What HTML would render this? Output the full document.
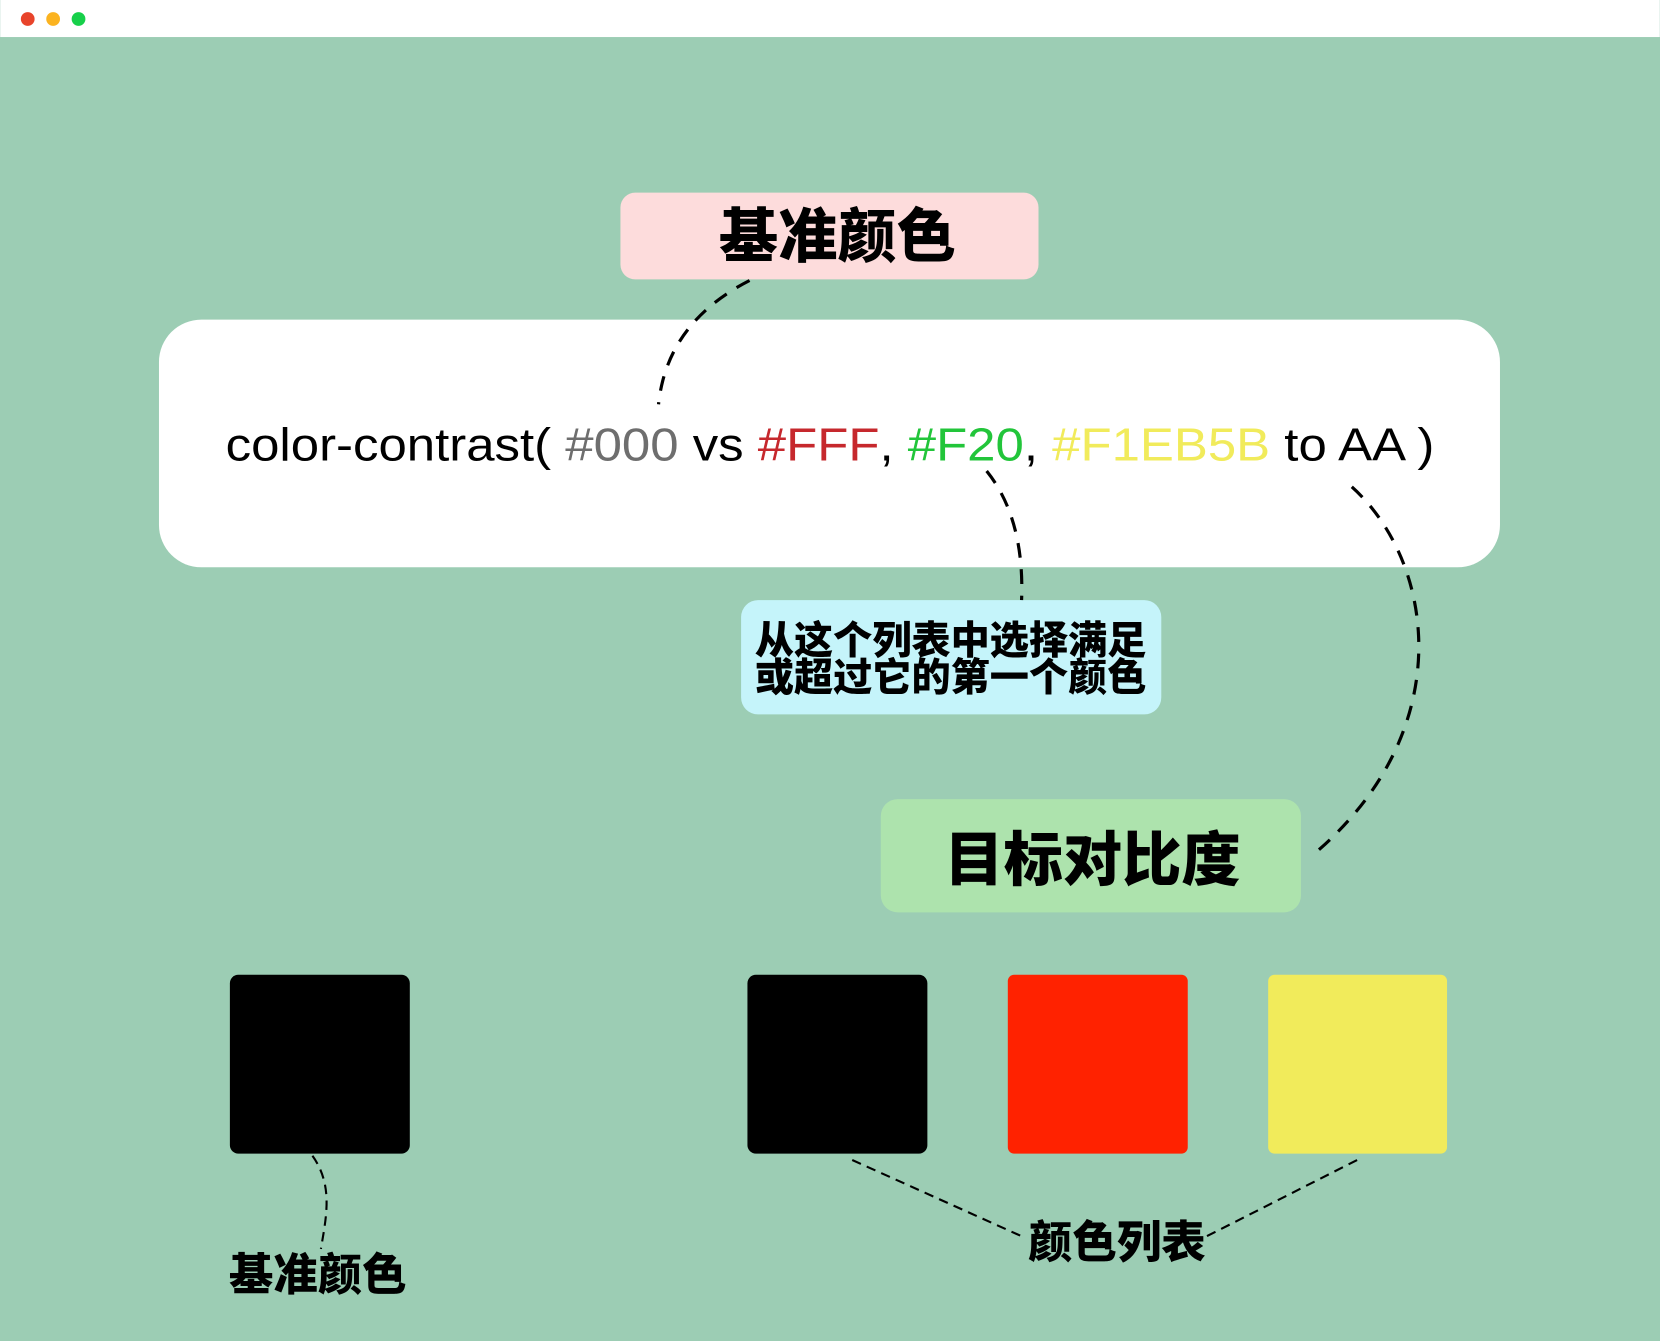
<!DOCTYPE html>
<html><head><meta charset="utf-8"><style>
html,body{margin:0;padding:0;background:#9ccdb4;}
svg{display:block}
.cjk{font-family:"Liberation Sans","Noto Sans CJK SC",sans-serif;font-weight:900;fill:#000}
</style></head><body>
<svg width="1660" height="1341" viewBox="0 0 1568 1267" xmlns="http://www.w3.org/2000/svg">
<rect x="0" y="0" width="1568" height="1267" fill="#9ccdb4"/>
<rect x="0" y="0" width="1568" height="35" fill="#ffffff"/>
<circle cx="26" cy="18" r="6.5" fill="#e8442b"/>
<circle cx="50" cy="18" r="6.5" fill="#fbb320"/>
<circle cx="74" cy="18" r="6.5" fill="#17d04a"/>

<rect x="586" y="182" width="395" height="82" rx="14" fill="#fddcdc"/>
<text x="791" y="243" text-anchor="middle" class="cjk" font-size="56">基准颜色</text>

<rect x="150" y="302" width="1267" height="234" rx="40" fill="#ffffff"/>
<text x="213" y="435" font-family="Liberation Sans, sans-serif" font-size="44" textLength="1142" lengthAdjust="spacingAndGlyphs"><tspan fill="#000">color-contrast( </tspan><tspan fill="#6e6e6e">#000</tspan><tspan fill="#000"> vs </tspan><tspan fill="#c6282d">#FFF</tspan><tspan fill="#000">, </tspan><tspan fill="#22c53a">#F20</tspan><tspan fill="#000">, </tspan><tspan fill="#f1eb5b">#F1EB5B</tspan><tspan fill="#000"> to AA )</tspan></text>

<rect x="700" y="567" width="397" height="108" rx="16" fill="#c5f4fa"/>
<text x="898" y="618" text-anchor="middle" class="cjk" font-size="37">从这个列表中选择满足</text>
<text x="898" y="653" text-anchor="middle" class="cjk" font-size="37">或超过它的第一个颜色</text>

<rect x="832" y="755" width="397" height="107" rx="16" fill="#ade3ad"/>
<text x="1032" y="832" text-anchor="middle" class="cjk" font-size="56">目标对比度</text>

<rect x="217" y="921" width="170" height="169" rx="8" fill="#000"/>
<rect x="706" y="921" width="170" height="169" rx="8" fill="#000"/>
<rect x="952" y="921" width="170" height="169" rx="6" fill="#ff2200"/>
<rect x="1198" y="921" width="169" height="169" rx="6" fill="#f1eb5b"/>

<text x="300" y="1219" text-anchor="middle" class="cjk" font-size="42">基准颜色</text>
<text x="1055" y="1188" text-anchor="middle" class="cjk" font-size="42">颜色列表</text>

<g fill="none" stroke="#000" stroke-linecap="butt">
<path d="M708,265 Q630,305 622,382" stroke-width="3" stroke-dasharray="14 11"/>
<path d="M932,445 Q968,490 965,567" stroke-width="3" stroke-dasharray="14 11"/>
<path d="M1277,460 C1355,530 1380,690 1240,808" stroke-width="3" stroke-dasharray="14 11"/>
<path d="M295,1092 C315,1120 308,1150 303,1180" stroke-width="2" stroke-dasharray="9 6"/>
<path d="M805,1096 L965,1168" stroke-width="2" stroke-dasharray="9 6"/>
<path d="M1282,1096 L1140,1168" stroke-width="2" stroke-dasharray="9 6"/>
</g>
</svg>
</body></html>
